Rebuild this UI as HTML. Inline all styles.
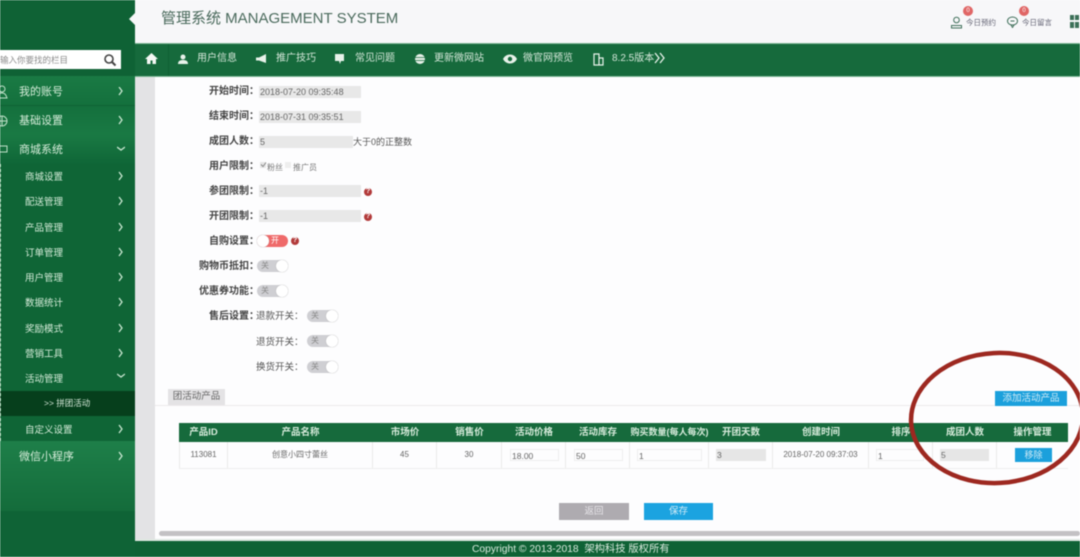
<!DOCTYPE html>
<html lang="zh"><head><meta charset="utf-8"><title>管理系统</title>
<style>
html,body{margin:0;padding:0;width:1080px;height:557px;overflow:hidden;background:#fff}
#r{position:relative;width:1080px;height:557px;overflow:hidden;font-family:"Liberation Sans","Noto Sans CJK SC",sans-serif;filter:blur(.55px)}
#r div,#r span.a,#r svg{position:absolute}
.t{white-space:nowrap;line-height:14px}
.m{color:#d5ecd9;font-size:11px;left:19px}
.s{color:#d5ecd9;font-size:9.5px;left:25px}
.n{color:#d3e6d8;font-size:10px;top:52px}
.l{color:#444;font-size:10px;font-weight:bold;text-align:right;width:70px;left:189px}
.i{background:#e8e8e8;height:12px;color:#666;font-size:9px;line-height:12px;padding-left:1px;left:259px;width:101px}
.q{width:8px;height:8px;border-radius:50%;background:#b23a3a;color:#fff;font-size:7px;line-height:8px;text-align:center;font-weight:bold}
.sw{width:31px;height:12px;border-radius:6px;background:#cfcfd3;color:#888;font-size:8px;line-height:12px}
.sw b{position:absolute;right:0;top:0;width:12px;height:12px;border-radius:50%;background:#fff;box-shadow:0 0 1px #999}
.sw span{position:absolute;left:4px;top:0;font-weight:normal}
.h{top:423px;height:19px;color:#d8ecdc;font-size:9.5px;font-weight:bold;line-height:19px;text-align:center}
.c{top:442px;height:26px;line-height:26px;color:#666;font-size:8px;text-align:center;border-right:1px solid #eaeaea;box-sizing:border-box}
.b{top:449px;height:12px;line-height:12px;font-size:8.5px;color:#666;text-align:left;padding-left:1px;box-sizing:border-box}
</style></head><body><div id="r">

<div style="left:0;top:0;width:135px;height:557px;background:#0f6235"></div>
<div style="left:0;top:76px;width:135px;height:60px;background:linear-gradient(#1a7a44,#14703d 50%,#1a7a44)"></div>
<div style="left:0;top:105px;width:135px;height:1px;background:#0f6235"></div>
<div style="left:0;top:134px;width:135px;height:30px;background:linear-gradient(#1a7a44,#0f6637)"></div>
<div style="left:0;top:164px;width:135px;height:277px;background:#0f6536"></div>
<div style="left:0;top:441px;width:135px;height:70px;background:linear-gradient(#1e7f49,#146c3b)"></div>
<div style="left:0;top:511px;width:135px;height:46px;background:#0f6336"></div>
<div style="left:0;top:391px;width:135px;height:25px;background:#063f1c"></div>
<div style="left:0;top:164px;width:1px;height:277px;border-left:1px dashed #9fd0ad"></div>

<div style="left:0;top:50px;width:121px;height:19px;background:#fff"></div>
<div class="t" style="left:0;top:53px;font-size:8.5px;color:#8b8b8b">输入你要找的栏目</div>
<svg style="left:103px;top:53px" width="14" height="14" viewBox="0 0 14 14"><circle cx="6" cy="6" r="4" fill="none" stroke="#444" stroke-width="1.6"/><path d="M9 9l3.5 3.5" stroke="#444" stroke-width="2"/></svg>

<svg style="left:0;top:85px" width="12" height="70" viewBox="0 0 12 70" fill="none" stroke="#bfe0c8" stroke-width="1"><circle cx="2" cy="4" r="3"/><path d="M-3 13c0-4 2-5 5-5s4 2 5 5z"/><circle cx="2" cy="36" r="5"/><path d="M-3 36h10M2 31v10"/><path d="M-2 61h9v6h-9z"/></svg>

<div class="t m" style="top:85px">我的账号</div>
<div class="t m" style="top:114px">基础设置</div>
<div class="t m" style="top:143px">商城系统</div>
<div class="t s" style="top:171px">商城设置</div>
<div class="t s" style="top:196px">配送管理</div>
<div class="t s" style="top:222px">产品管理</div>
<div class="t s" style="top:247px">订单管理</div>
<div class="t s" style="top:272px">用户管理</div>
<div class="t s" style="top:297px">数据统计</div>
<div class="t s" style="top:323px">奖励模式</div>
<div class="t s" style="top:348px">营销工具</div>
<div class="t s" style="top:373px">活动管理</div>
<div class="t" style="left:44px;top:396px;color:#cfe3d3;font-size:8.5px">&gt;&gt; 拼团活动</div>
<div class="t s" style="top:424px">自定义设置</div>
<div class="t m" style="top:450px">微信小程序</div>

<svg style="left:117px;top:87px" width="8" height="380" viewBox="0 0 8 380" fill="none" stroke="#c8e6d0" stroke-width="1.3"><path d="M2 0l3 4-3 4M2 29l3 4-3 4M2 85l3 4-3 4M2 110l3 4-3 4M2 136l3 4-3 4M2 161l3 4-3 4M2 186l3 4-3 4M2 211l3 4-3 4M2 237l3 4-3 4M2 262l3 4-3 4M2 338l3 4-3 4M2 365l3 4-3 4"/><path d="M0 60l4 3 4-3M0 287l4 3 4-3"/></svg>

<div style="left:135px;top:0;width:945px;height:43px;background:#f7f7f9"></div>
<div style="left:129px;top:13px;width:6px;height:12px;background:#f7f7f9;clip-path:polygon(100% 0,100% 100%,0 50%)"></div>
<div class="t" style="left:161px;top:9px;font-size:15px;line-height:20px;color:#4a6a5c">管理系统 MANAGEMENT SYSTEM</div>

<div style="left:963px;top:6px;width:10px;height:10px;border-radius:50%;background:#e06666;color:#fff;font-size:6px;line-height:10px;text-align:center">0</div>
<div style="left:1019px;top:6px;width:10px;height:10px;border-radius:50%;background:#e06666;color:#fff;font-size:6px;line-height:10px;text-align:center">0</div>
<svg style="left:950px;top:16px" width="13" height="13" viewBox="0 0 13 13" fill="none" stroke="#3f6f5a" stroke-width="1"><circle cx="6.500" cy="4" r="2.800"/><path d="M1.500 12v-2.500h10V12z"/></svg>
<svg style="left:1006px;top:16px" width="13" height="12" viewBox="0 0 13 12" fill="none" stroke="#3f6f5a" stroke-width="1"><ellipse cx="6.500" cy="5" rx="5" ry="4"/><path d="M5 9l1.500 2.500L8 9"/><path d="M4.500 5h4" /></svg>
<div class="t" style="left:966px;top:16px;font-size:7.5px;color:#667">今日预约</div>
<div class="t" style="left:1022px;top:16px;font-size:7.5px;color:#667">今日留言</div>
<svg style="left:1070px;top:15px" width="10" height="14" viewBox="0 0 10 14" fill="#3c7058"><path d="M0 0h4v5H0zM5 0h4v5H5zM0 7h4v6H0zM5 7h4v6H5z"/></svg>

<div style="left:135px;top:43px;width:945px;height:34px;background:#166a3c;border-top:1px solid #7fb797;border-bottom:1px solid #7fb797;box-sizing:border-box"></div>
<svg style="left:145px;top:52px" width="13" height="13" viewBox="0 0 13 13" fill="#f4f8f4"><path d="M6.500 1L0 7h2v5h3.500V8.500h2V12H11V7h2z"/></svg>
<div style="left:168px;top:44px;width:1px;height:32px;background:#0f5f33"></div>
<svg style="left:178px;top:54px" width="10" height="11" viewBox="0 0 10 11" fill="#e8f2ea"><circle cx="5" cy="3" r="2.500"/><path d="M0 10c0-3 2-4 5-4s5 1 5 4z"/></svg>
<div class="t n" style="left:197px">用户信息</div>
<svg style="left:256px;top:54px" width="11" height="10" viewBox="0 0 11 10" fill="#e8f2ea"><path d="M0 3.500h3L10 0v9L3 6.500H0z"/></svg>
<div class="t n" style="left:276px">推广技巧</div>
<svg style="left:335px;top:54px" width="10" height="10" viewBox="0 0 10 10" fill="#e8f2ea"><path d="M0 0h9v7H6l-1 3-1-3H0z"/></svg>
<div class="t n" style="left:355px">常见问题</div>
<svg style="left:415px;top:54px" width="10" height="10" viewBox="0 0 10 10"><circle cx="5" cy="5" r="5" fill="#e8f2ea"/><path d="M0 3.500h10M0 6.500h10" stroke="#166a3c" stroke-width=".7"/></svg>
<div class="t n" style="left:434px">更新微网站</div>
<svg style="left:503px;top:54px" width="14" height="10" viewBox="0 0 14 10"><path d="M0 5c3-6 11-6 14 0-3 6-11 6-14 0z" fill="#e8f2ea"/><circle cx="7" cy="5" r="2.200" fill="#166a3c"/></svg>
<div class="t n" style="left:523px">微官网预览</div>
<svg style="left:593px;top:53px" width="11" height="13" viewBox="0 0 11 13" fill="none" stroke="#e8f2ea" stroke-width="1.200"><path d="M1 1h5v11H1zM6 5h4v7H6z"/></svg>
<div class="t n" style="left:612px">8.2.5版本</div>
<svg style="left:654px;top:52px" width="12" height="12" viewBox="0 0 12 12" fill="none" stroke="#e8f2ea" stroke-width="1.300"><path d="M1 1l4 5-4 5M6 1l4 5-4 5"/></svg>

<div style="left:135px;top:77px;width:20px;height:464px;background:#e3e3e5"></div>
<div style="left:155px;top:77px;width:925px;height:464px;background:#fdfdfe"></div>
<div style="left:159px;top:531px;width:921px;height:5px;background:#c3c1c4;border-radius:3px"></div>
<div style="left:135px;top:541px;width:945px;height:16px;background:#0f6235"></div>
<div style="left:135px;top:539px;width:945px;height:2px;background:#dfe8e2"></div>
<div class="t" style="left:472px;top:543px;font-size:10.300px;color:#d8e8dc">Copyright © 2013-2018 &nbsp;架构科技 版权所有</div>

<div class="t l" style="top:85px">开始时间：</div>
<div class="i t" style="top:86px">2018-07-20 09:35:48</div>
<div class="t l" style="top:110px">结束时间：</div>
<div class="i t" style="top:111px">2018-07-31 09:35:51</div>
<div class="t l" style="top:135px">成团人数：</div>
<div class="i t" style="top:136px;width:93px">5</div>
<div class="t" style="left:353px;top:135px;font-size:9px;color:#555">大于0的正整数</div>
<div class="t l" style="top:160px">用户限制：</div>
<div style="left:260px;top:162px;width:6px;height:6px;background:#e6e6e6"></div>
<svg style="left:260px;top:161px" width="7" height="7" viewBox="0 0 7 7" fill="none" stroke="#888" stroke-width="1"><path d="M1 3.500l2 2 3-4"/></svg>
<div class="t" style="left:267px;top:161px;font-size:8px;color:#777">粉丝</div>
<div style="left:285px;top:162px;width:6px;height:6px;background:#eee"></div>
<div class="t" style="left:293px;top:161px;font-size:8px;color:#777">推广员</div>
<div class="t l" style="top:185px">参团限制：</div>
<div class="i t" style="top:185px">-1</div>
<div class="q" style="left:364px;top:188px">?</div>
<div class="t l" style="top:210px">开团限制：</div>
<div class="i t" style="top:210px">-1</div>
<div class="q" style="left:364px;top:213px">?</div>
<div class="t l" style="top:235px">自购设置：</div>
<div class="sw" style="left:257px;top:235px;background:#ef6a6a;color:#fff"><b style="left:0;right:auto"></b><span style="left:14px">开</span></div>
<div class="q" style="left:291px;top:237px">?</div>
<div class="t l" style="top:260px">购物币抵扣：</div>
<div class="sw" style="left:257px;top:260px"><span>关</span><b></b></div>
<div class="t l" style="top:285px">优惠券功能：</div>
<div class="sw" style="left:257px;top:285px"><span>关</span><b></b></div>
<div class="t l" style="top:310px">售后设置：</div>
<div class="t" style="left:256px;top:310px;font-size:9.500px;color:#555">退款开关：</div>
<div class="sw" style="left:307px;top:310px"><span>关</span><b></b></div>
<div class="t" style="left:256px;top:336px;font-size:9.500px;color:#555">退货开关：</div>
<div class="sw" style="left:307px;top:335px"><span>关</span><b></b></div>
<div class="t" style="left:256px;top:361px;font-size:9.500px;color:#555">换货开关：</div>
<div class="sw" style="left:307px;top:361px"><span>关</span><b></b></div>

<div style="left:168px;top:389px;width:57px;height:16px;background:#e4e3e5;color:#666;font-size:9.500px;line-height:16px;text-align:center">团活动产品</div>
<div style="left:155px;top:405px;width:925px;height:1px;background:#eceaec"></div>
<div style="left:995px;top:391px;width:72px;height:15px;background:#1ba0dc;color:#cfeaf6;font-size:9.500px;line-height:15px;text-align:center">添加活动产品</div>

<div style="left:179px;top:423px;width:889px;height:19px;background:#166a3c"></div>
<div class="h" style="left:179px;width:49px">产品ID</div>
<div class="h" style="left:228px;width:145px">产品名称</div>
<div class="h" style="left:373px;width:64px">市场价</div>
<div class="h" style="left:437px;width:65px">销售价</div>
<div class="h" style="left:502px;width:64px">活动价格</div>
<div class="h" style="left:566px;width:64px">活动库存</div>
<div class="h" style="left:630px;width:79px;font-size:9px">购买数量(每人每次)</div>
<div class="h" style="left:709px;width:64px">开团天数</div>
<div class="h" style="left:773px;width:96px">创建时间</div>
<div class="h" style="left:869px;width:64px">排序</div>
<div class="h" style="left:933px;width:64px">成团人数</div>
<div class="h" style="left:997px;width:71px">操作管理</div>

<div class="c" style="left:179px;width:49px;border-left:1px solid #eaeaea">113081</div>
<div class="c" style="left:228px;width:145px">创意小四寸蕾丝</div>
<div class="c" style="left:373px;width:64px">45</div>
<div class="c" style="left:437px;width:65px">30</div>
<div class="c" style="left:502px;width:64px"></div>
<div class="c" style="left:566px;width:64px"></div>
<div class="c" style="left:630px;width:79px"></div>
<div class="c" style="left:709px;width:64px"></div>
<div class="c" style="left:773px;width:96px">2018-07-20 09:37:03</div>
<div class="c" style="left:869px;width:64px"></div>
<div class="c" style="left:933px;width:64px"></div>
<div class="c" style="left:997px;width:71px;border-right:0"></div>
<div style="left:179px;top:468px;width:889px;height:1px;background:#eeeeee"></div>

<div class="b" style="left:510px;width:49px;border:1px solid #eee">18.00</div>
<div class="b" style="left:574px;width:49px;border:1px solid #eee">50</div>
<div class="b" style="left:637px;width:65px;border:1px solid #eee">1</div>
<div class="b" style="left:716px;width:50px;background:#e6e6e6">3</div>
<div class="b" style="left:876px;width:48px;border:1px solid #eee">1</div>
<div class="b" style="left:940px;width:49px;background:#e6e6e6">5</div>
<div style="left:1015px;top:448px;width:37px;height:14px;background:#1ba0dc;color:#cfeaf6;font-size:9px;line-height:14px;text-align:center">移除</div>

<svg style="left:0;top:0" width="1080" height="557" viewBox="0 0 1080 557"><ellipse cx="997" cy="418" rx="86" ry="65" fill="none" stroke="#9d2820" stroke-width="4.500" transform="rotate(-3 997 418)"/></svg>

<div style="left:559px;top:503px;width:70px;height:17px;background:#aeabb0;color:#e6e4e8;font-size:9.500px;line-height:17px;text-align:center">返回</div>
<div style="left:644px;top:503px;width:69px;height:17px;background:#1ba3e0;color:#cfeaf6;font-size:9.500px;line-height:17px;text-align:center">保存</div>
</div></body></html>
